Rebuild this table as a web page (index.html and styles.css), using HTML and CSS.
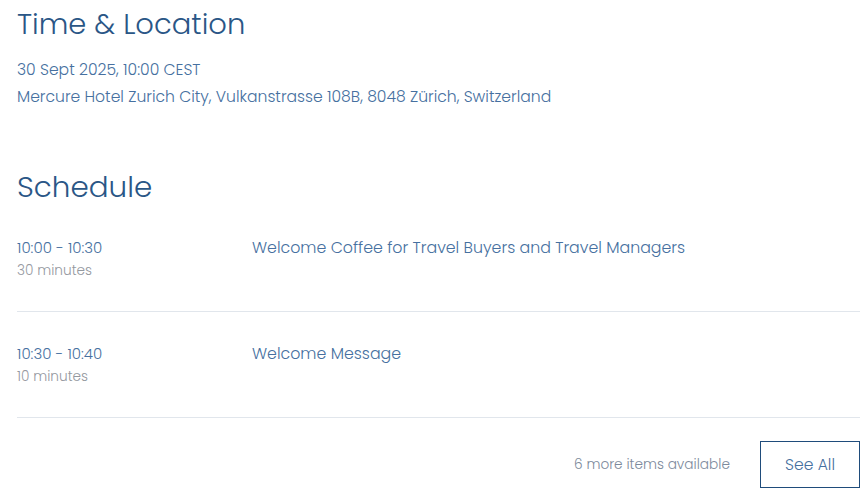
FILE: index.html
```html
<!DOCTYPE html>
<html lang="en">
<head>
<meta charset="utf-8">
<title>Time & Location</title>
<link rel="stylesheet" href="styles.css">
</head>
<body>
<main class="page">
  <section class="location">
    <h2 class="heading">Time &amp; Location</h2>
    <p class="date">30 Sept 2025, 10:00 CEST</p>
    <p class="address">Mercure Hotel Zurich City, Vulkanstrasse 108B, 8048 Zürich, Switzerland</p>
  </section>
  <section class="schedule">
    <h2 class="heading heading-schedule">Schedule</h2>
    <ul class="items">
      <li class="item">
        <div class="when">
          <div class="time">10:00 - 10:30</div>
          <div class="duration">30 minutes</div>
        </div>
        <div class="title">Welcome Coffee for Travel Buyers and Travel Managers</div>
      </li>
      <li class="item">
        <div class="when">
          <div class="time">10:30 - 10:40</div>
          <div class="duration">10 minutes</div>
        </div>
        <div class="title">Welcome Message</div>
      </li>
    </ul>
    <div class="more">
      <span class="more-text">6 more items available</span>
      <button class="see-all">See All</button>
    </div>
  </section>
</main>
</body>
</html>
```
FILE: styles.css
```css
* { box-sizing: border-box; }
html, body { margin: 0; padding: 0; background: #fff; }
body {
  font-family: "Poppins", Inter, "Noto Sans", sans-serif;
  font-weight: 300;
  color: #4670a0;
}
.page { padding: 0 5px 0 17px; }
.heading {
  margin: 0;
  font-weight: 300;
  font-size: 29px;
  line-height: 48px;
  color: #2a5686;
}
.date, .address {
  margin: 0;
  font-size: 15.6px;
  line-height: 27px;
  color: #4670a0;
}
.date { margin-top: 8px; }
.schedule { margin-top: 53px; }
.heading-schedule { font-size: 29.4px; }
.items { list-style: none; margin: -5px 0 0; padding: 0; }
.item {
  display: flex;
  align-items: flex-start;
  padding: 30px 0 29px;
  border-bottom: 1px solid #e1e6ec;
}
.when { width: 235px; flex: none; }
.time { font-size: 15px; line-height: 24px; color: #4670a0; }
.duration { font-size: 13.7px; line-height: 22px; color: #95999f; }
.title { font-size: 15.8px; line-height: 24px; color: #4670a0; }
.more {
  display: flex;
  justify-content: flex-end;
  align-items: center;
  gap: 30px;
  margin-top: 23px;
}
.more-text { font-size: 13.7px; color: #7d8a9c; }
.see-all {
  width: 100px;
  height: 47px;
  background: #fff;
  border: 1px solid #1f4c7b;
  font-family: inherit;
  font-weight: 300;
  font-size: 15.6px;
  color: #4670a0;
  cursor: pointer;
}
```
